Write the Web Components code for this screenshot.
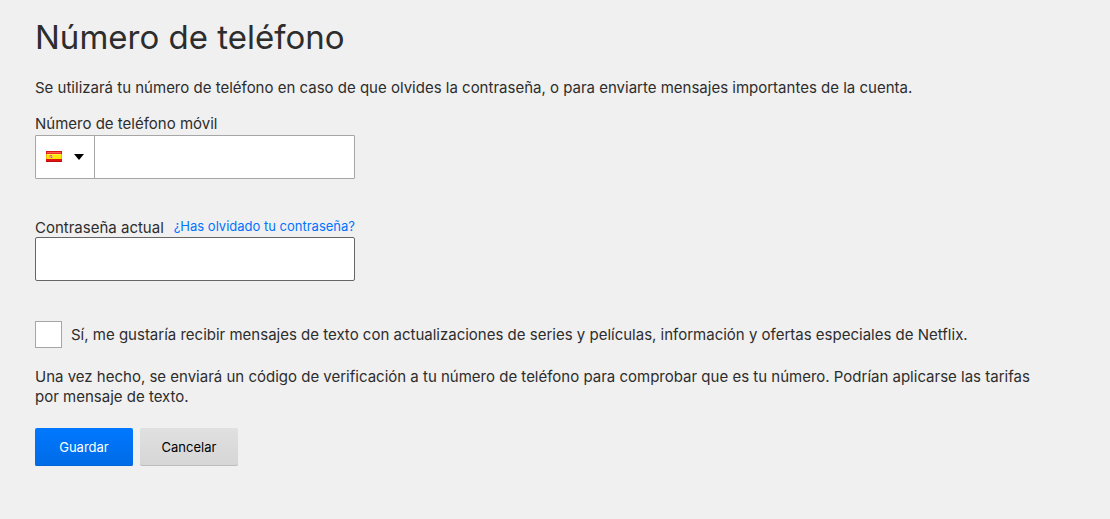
<!DOCTYPE html>
<html lang="es">
<head>
<meta charset="utf-8">
<meta name="viewport" content="width=device-width, initial-scale=1">
<title>Número de teléfono</title>
<style>
body { margin: 0; background: #f0f0f0; color: #2d2d2d; font: 15px/20px Inter, "Liberation Sans", sans-serif; }
</style>
</head>
<body>
<phone-page></phone-page>

<template id="phone-page">
  <style>
    :host { display: block; padding: 16px 35px 40px; }
    h1 { margin: 0; font-size: 33px; line-height: 42px; font-weight: 400; }
    p { margin: 0; }
    .intro { margin-top: 20px; }
    phone-field { margin-top: 16px; }
    password-field { margin-top: 39px; }
    check-option { margin-top: 40px; }
    .note { margin-top: 19px; padding-right: 30px; }
    .actions { display: flex; gap: 7px; margin-top: 21px; }
  </style>
  <h1>Número de teléfono</h1>
  <p class="intro">Se utilizará tu número de teléfono en caso de que olvides la contraseña, o para enviarte mensajes importantes de la cuenta.</p>
  <phone-field></phone-field>
  <password-field></password-field>
  <check-option>Sí, me gustaría recibir mensajes de texto con actualizaciones de series y películas, información y ofertas especiales de Netflix.</check-option>
  <p class="note">Una vez hecho, se enviará un código de verificación a tu número de teléfono para comprobar que es tu número. Podrían aplicarse las tarifas por mensaje de texto.</p>
  <div class="actions">
    <action-button class="primary">Guardar</action-button>
    <action-button>Cancelar</action-button>
  </div>
</template>

<template id="phone-field">
  <style>
    :host { display: block; max-width: 320px; }
    label { display: block; padding-bottom: 1px; }
    .box { display: flex; box-sizing: border-box; height: 44px; border: 1px solid #a6a6a6; border-radius: 1px; background: #fff; }
    .country { position: relative; flex: none; box-sizing: border-box; width: 59px; display: flex; align-items: center; gap: 12px; padding-left: 10px; border-right: 1px solid #a6a6a6; }
    .country svg { display: block; flex: none; }
    select { position: absolute; inset: 0; width: 100%; height: 100%; opacity: 0; cursor: pointer; }
    input { flex: 1; min-width: 0; border: 0; padding: 0 10px; background: transparent; font: inherit; color: inherit; }
  </style>
  <label for="phone">Número de teléfono móvil</label>
  <div class="box">
    <div class="country">
      <svg width="16" height="12" viewBox="0 0 16 12" shape-rendering="crispEdges" aria-hidden="true">
        <rect width="16" height="11" fill="#dc1414"/>
        <rect x="1" y="1" width="14" height="1" fill="#f65a50"/>
        <rect x="1" y="2" width="14" height="1" fill="#ee2c20"/>
        <rect y="3" width="16" height="5" fill="#ffe800"/>
        <rect y="3" width="16" height="1" fill="#fff04a"/>
        <rect y="3" width="1" height="5" fill="#f5b800"/>
        <rect x="15" y="3" width="1" height="5" fill="#f5b800"/>
        <rect x="3" y="4" width="1" height="3" fill="#e8b070"/>
        <rect x="4" y="4" width="2" height="1" fill="#dc6a50"/>
        <rect x="4" y="5" width="2" height="2" fill="#e8a090"/>
        <rect x="5" y="6" width="1" height="1" fill="#c05a40"/>
        <rect x="6" y="5" width="1" height="2" fill="#e0bc60"/>
        <rect y="10" width="16" height="1" fill="#c40c0c"/>
      </svg>
      <svg width="10" height="6" viewBox="0 0 10 6" aria-hidden="true"><path d="M0 0h10L5 6z" fill="#000"/></svg>
      <select aria-label="País"><option>España</option></select>
    </div>
    <input id="phone" type="tel">
  </div>
</template>

<template id="password-field">
  <style>
    :host { display: block; max-width: 320px; }
    .head { display: flex; justify-content: space-between; height: 19px; white-space: nowrap; }
    a { font-size: 13px; line-height: 16px; color: #0073ff; text-decoration: none; }
    input { display: block; box-sizing: border-box; width: 100%; height: 44px; padding: 0 10px; border: 1px solid #666; border-radius: 2px; background: #fff; font: inherit; color: inherit; }
  </style>
  <div class="head"><label for="password">Contraseña actual</label><a href="#recuperar">¿Has olvidado tu contraseña?</a></div>
  <input id="password" type="password">
</template>

<template id="check-option">
  <style>
    :host { display: block; }
    label { display: flex; align-items: center; gap: 9px; }
    input { appearance: none; flex: none; box-sizing: border-box; width: 27px; height: 27px; margin: 0; border: 1px solid #a6a6a6; background: #fff; }
    input:checked { background: #0073ff; }
  </style>
  <label><input type="checkbox"><span><slot></slot></span></label>
</template>

<template id="action-button">
  <style>
    :host { display: block; }
    button { display: block; box-sizing: border-box; min-width: 98px; height: 38px; padding: 0 20px; border: 0; border-radius: 2px; background: linear-gradient(#e0e0e0, #d6d6d6); box-shadow: inset 0 -1px #bdbdbd; color: #000; font: 13px/20px Inter, "Liberation Sans", sans-serif; cursor: pointer; }
    :host(.primary) button { background: linear-gradient(#0078ff, #006be6); box-shadow: inset 0 -1px #0064d6; color: #fff; }
  </style>
  <button type="button"><slot></slot></button>
</template>

<script>
for (const name of ["phone-field", "password-field", "check-option", "action-button", "phone-page"]) {
  customElements.define(name, class extends HTMLElement {
    constructor() {
      super();
      this.attachShadow({ mode: "open" }).append(document.getElementById(name).content.cloneNode(true));
    }
  });
}
</script>
</body>
</html>
